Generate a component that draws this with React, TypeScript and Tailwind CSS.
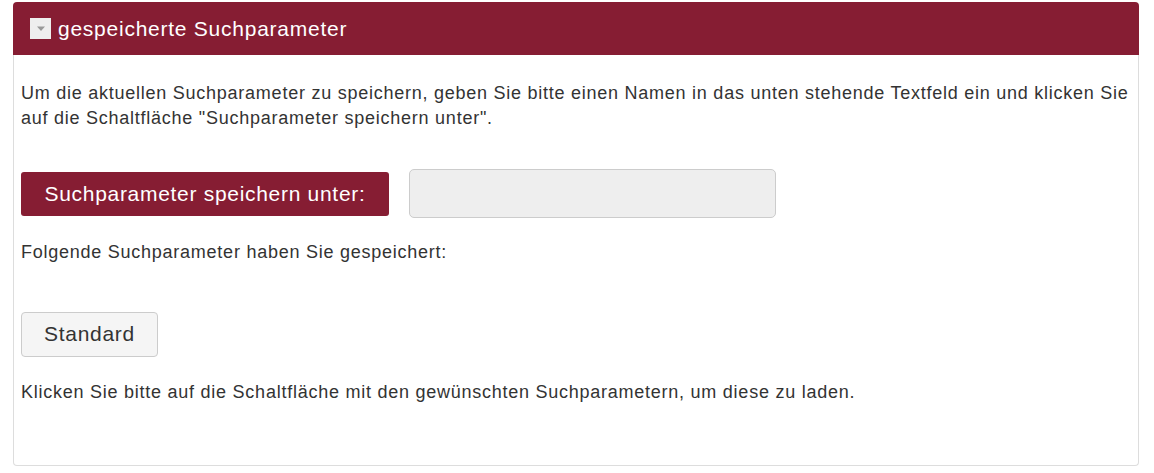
import React from "react";

export default function App() {
  return (
    <div className="min-h-screen bg-white pt-[2px] pl-[13px] pr-[15px] font-['Liberation_Sans',Arial,sans-serif] text-[#333]">
      {/* ── Header ── */}
      <div className="flex h-[53px] items-center rounded-t-[4px] bg-[#861d33] pl-[17px]">
        <div className="flex h-[21px] w-[21px] items-center justify-center bg-[#eeeeee]">
          <svg width="10" height="6" viewBox="0 0 10 6">
            <path d="M1 0.5 L9 0.5 L5 5 Z" fill="#999" />
          </svg>
        </div>
        <span className="ml-[7px] text-[21px] leading-none tracking-[0.75px] text-white">gespeicherte Suchparameter</span>
      </div>

      {/* ── Body ── */}
      <div className="rounded-b-[4px] border border-t-0 border-[#dddddd] pl-[7px] pr-[3px] pt-[26px] pb-[60px] text-[18px] leading-[25px] tracking-[0.75px]">
        <p>
          Um die aktuellen Suchparameter zu speichern, geben Sie bitte einen Namen in das unten stehende Textfeld ein und
          klicken Sie auf die Schaltfläche "Suchparameter speichern unter".
        </p>

        <div className="mt-[38px] flex items-center gap-[20px]">
          <button className="h-[44px] w-[368px] rounded-[3px] bg-[#861d33] text-[21px] tracking-[0.7px] text-white">
            Suchparameter speichern unter:
          </button>
          <input
            type="text"
            className="h-[49px] w-[367px] rounded-[5px] border border-[#cccccc] bg-[#eeeeee] px-3 outline-none"
          />
        </div>

        <p className="mt-[22px]">Folgende Suchparameter haben Sie gespeichert:</p>

        <button className="mt-[47px] h-[45px] w-[137px] rounded-[4px] border border-[#cccccc] bg-[#f5f5f5] pb-[2px] text-[21px] tracking-[0.7px] text-[#333]">
          Standard
        </button>

        <p className="mt-[23px]">
          Klicken Sie bitte auf die Schaltfläche mit den gewünschten Suchparametern, um diese zu laden.
        </p>
      </div>
    </div>
  );
}
